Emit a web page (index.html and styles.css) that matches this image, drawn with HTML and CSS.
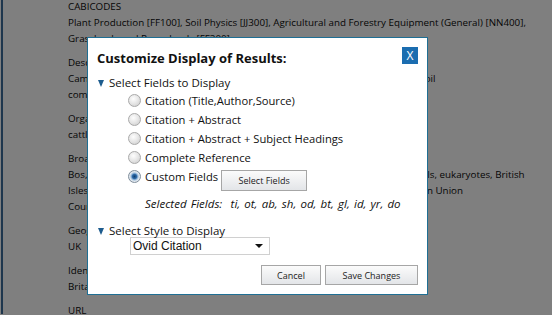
FILE: index.html
```html
<!DOCTYPE html>
<html>
<head>
<meta charset="utf-8">
<link rel="stylesheet" href="styles.css">
</head>
<body>
<div class="page">
  <div class="record">
    <div class="group">
      <div class="line">CABICODES</div>
      <div class="line">Plant Production [FF100], Soil Physics [JJ300], Agricultural and Forestry Equipment (General) [NN400],</div>
      <div class="line">Grasslands and Rangelands [FF300]</div>
    </div>
    <div class="group">
      <div class="line">Descriptors</div>
      <div class="line">Cambisols, compaction, crop yield, experiments, grassland, sandy loam soils. soil</div>
      <div class="line">compaction, soil physical properties</div>
    </div>
    <div class="group">
      <div class="line">Organism Descriptors</div>
      <div class="line">cattle</div>
    </div>
    <div class="group">
      <div class="line">Broader Terms</div>
      <div class="line">Bos, Bovidae, ruminants, Artiodactyla, mammals, vertebrates, Chordata, animals, eukaryotes, British</div>
      <div class="line">Isles, Western Europe, Europe, Developed Countries, OECD Countries, European Union</div>
      <div class="line">Countries</div>
    </div>
    <div class="group">
      <div class="line">Geographic Location</div>
      <div class="line">UK</div>
    </div>
    <div class="group">
      <div class="line">Identifiers</div>
      <div class="line">Britain</div>
    </div>
    <div class="group">
      <div class="line">URL</div>
    </div>
  </div>
</div>
<div class="overlay"></div>
<div class="dialog">
  <div class="dialog-head">
    <h1 class="title">Customize Display of Results:</h1>
    <span class="close">X</span>
  </div>
  <div class="section">
    <div class="section-title"><span class="tri"></span>Select Fields to Display</div>
    <div class="options">
      <div class="opt"><span class="radio"></span>Citation (Title,Author,Source)</div>
      <div class="opt"><span class="radio"></span>Citation + Abstract</div>
      <div class="opt"><span class="radio"></span>Citation + Abstract + Subject Headings</div>
      <div class="opt"><span class="radio"></span>Complete Reference</div>
      <div class="opt"><span class="radio checked"></span>Custom Fields<span class="btn btn-small">Select Fields</span></div>
      <div class="selected">Selected Fields:&nbsp; ti, ot, ab, sh, od, bt, gl, id, yr, do</div>
    </div>
  </div>
  <div class="section section2">
    <div class="section-title"><span class="tri"></span>Select Style to Display</div>
    <div class="select"><span>Ovid Citation</span><span class="caret"></span></div>
  </div>
  <div class="actions">
    <span class="btn btn-cancel">Cancel</span>
    <span class="btn btn-save">Save Changes</span>
  </div>
</div>
</body>
</html>
```
FILE: styles.css
```css
html, body {
  margin: 0;
  padding: 0;
  width: 552px;
  height: 315px;
  overflow: hidden;
  background: #fff;
}
body {
  font-family: "Open Sans", "DejaVu Sans", sans-serif;
  color: #1c1c1c;
}
.page {
  height: 315px;
  border-left: 2px solid #3d6d9a;
  margin-left: 1px;
}
.record {
  padding-left: 65px;
  margin-top: -1px;
  font-size: 9.8px;
  line-height: 16px;
  white-space: nowrap;
  color: #0a0a0a;
}
.group {
  margin-bottom: 8px;
}
.overlay {
  position: absolute;
  left: 0;
  top: 0;
  width: 552px;
  height: 315px;
  background: rgba(0, 0, 0, 0.5);
}
.dialog {
  position: absolute;
  left: 87px;
  top: 37px;
  width: 339px;
  height: 256px;
  background: #fff;
  border: 1px solid #1f6f94;
  color: #111;
  font-size: 11.2px;
}
.dialog-head {
  display: flex;
  justify-content: space-between;
  align-items: flex-start;
  padding: 9px 9px 0 9px;
  height: 21px;
}
.title {
  margin: 2px 0 0 0;
  font-size: 13px;
  font-weight: bold;
  line-height: 18px;
}
.close {
  width: 16px;
  height: 17px;
  background: #1b6db0;
  color: #fff;
  font-size: 12px;
  line-height: 17px;
  text-align: center;
}
.section {
  padding-left: 10px;
}
.section-title {
  display: flex;
  align-items: center;
  height: 17px;
  margin-top: 6px;
  font-size: 11.5px;
}
.tri {
  width: 0;
  height: 0;
  border-left: 3.5px solid transparent;
  border-right: 3.5px solid transparent;
  border-top: 7px solid #1d5c8e;
  margin-right: 5px;
  margin-top: 1px;
}
.options {
  padding-left: 30px;
}
.opt {
  display: flex;
  align-items: center;
  height: 19px;
}
.radio {
  box-sizing: border-box;
  width: 13px;
  height: 13px;
  border-radius: 50%;
  border: 1px solid #a9a9a9;
  background: radial-gradient(circle at 40% 35%, #fdfdfd 0%, #e8e8e8 45%, #c9c9c9 100%);
  margin-right: 4px;
}
.radio.checked {
  border-color: #7f8e9c;
  background: radial-gradient(circle at 50% 50%, #0f3e6e 0%, #2e6aa8 28%, #8fb3d6 42%, #e4eaf0 60%, #c8ced5 100%);
}
.btn {
  display: inline-flex;
  align-items: center;
  justify-content: center;
  box-sizing: border-box;
  border: 1px solid #a6a6a6;
  background: linear-gradient(#fbfbfb, #e3e5e8);
  color: #222;
  font-size: 9px;
}
.btn-small {
  width: 86px;
  height: 21px;
  margin-left: 3px;
  margin-top: 4px;
  margin-bottom: -4px;
}
.selected {
  font-style: italic;
  font-size: 11.5px;
  word-spacing: 1.2px;
  margin-top: 8px;
  padding-left: 17px;
  height: 19px;
  line-height: 19px;
  white-space: nowrap;
}
.section2 .section-title {
  margin-top: 9px;
}
.select {
  display: flex;
  justify-content: space-between;
  align-items: center;
  box-sizing: border-box;
  width: 140px;
  height: 18px;
  margin-left: 32px;
  margin-top: -2px;
  padding: 0 6px 0 2px;
  border: 1px solid #d0d0d0;
  font-family: "Liberation Sans", Arial, sans-serif;
  font-size: 12px;
  color: #111;
}
.caret {
  width: 0;
  height: 0;
  border-left: 4px solid transparent;
  border-right: 4px solid transparent;
  border-top: 4px solid #111;
}
.actions {
  display: flex;
  justify-content: flex-end;
  gap: 4px;
  padding: 10px 9px 0 0;
}
.btn-cancel {
  width: 60px;
  height: 20px;
}
.btn-save {
  width: 93px;
  height: 20px;
}
```
